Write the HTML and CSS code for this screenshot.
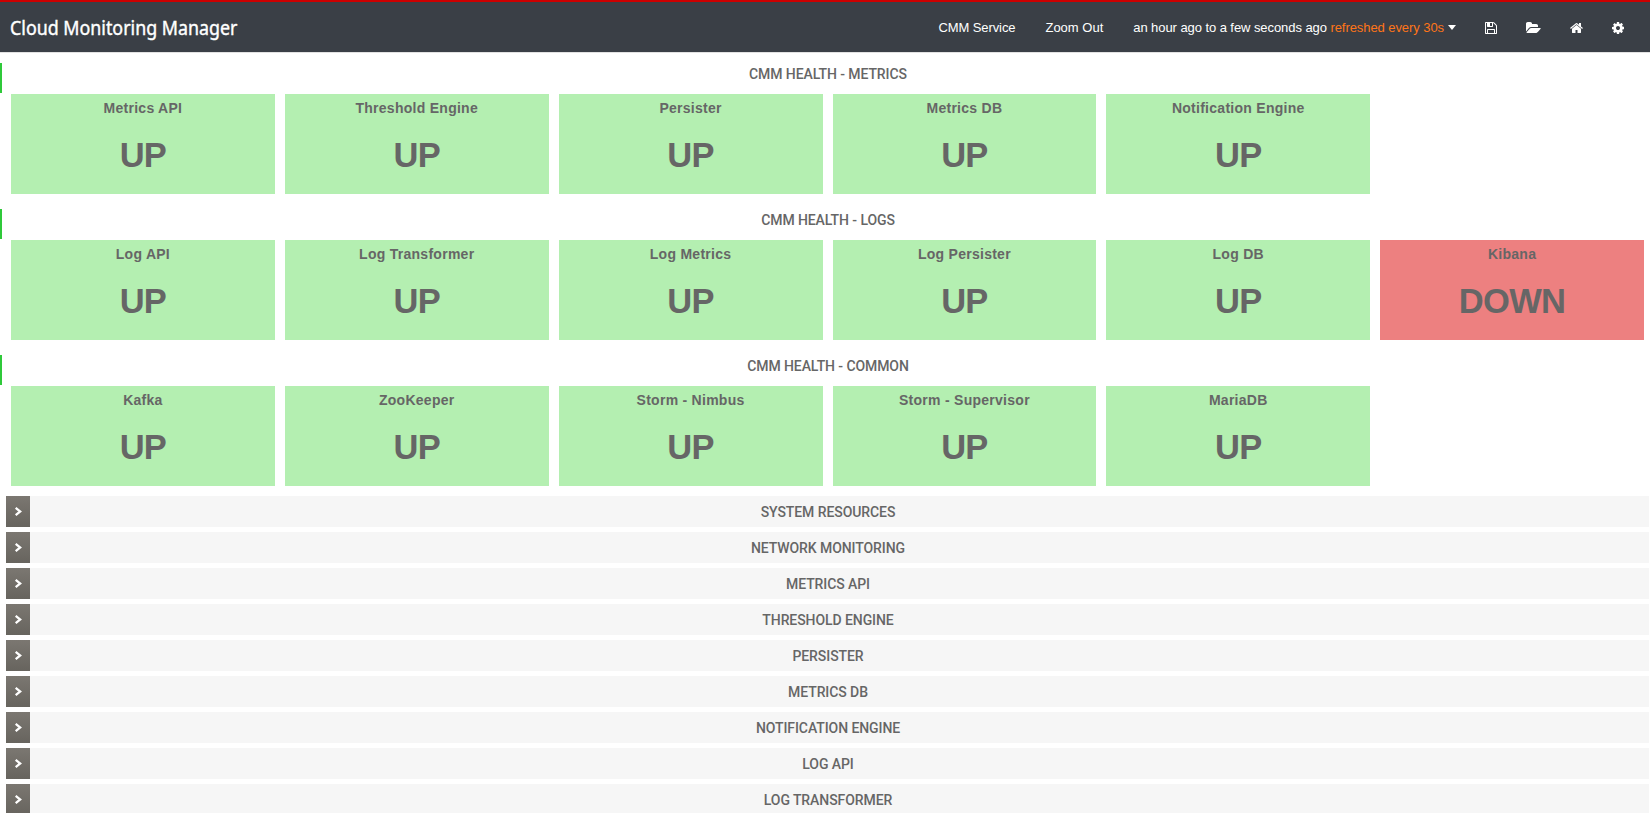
FILE: index.html
```html
<!DOCTYPE html>
<html lang="en">
<head>
<meta charset="utf-8">
<title>Cloud Monitoring Manager</title>
<link rel="stylesheet" href="styles.css">
</head>
<body>
<header class="topbar">
  <h1 class="brand">Cloud Monitoring Manager</h1>
  <nav class="nav">
    <a class="nav-service">CMM Service</a>
    <a class="nav-zoom">Zoom Out</a>
    <a class="nav-time">an hour ago to a few seconds ago <span class="refresh">refreshed every 30s</span><i class="caret"></i></a>
    <svg class="icon icon-save" viewBox="0 0 1536 1792"><path d="M384 1536h768v-384H384v384zm896 0h128V640q0-14-10-38.500T1378 567l-281-281q-10-10-34-20t-39-10v416q0 40-28 68t-68 28H352q-40 0-68-28t-28-68V256H128v1280h128v-416q0-40 28-68t68-28h832q40 0 68 28t28 68v416zM896 608V288q0-13-9.500-22.500T864 256H672q-13 0-22.500 9.500T640 288v320q0 13 9.500 22.500T672 640h192q13 0 22.500-9.500T896 608zm640 32v928q0 40-28 68t-68 28H96q-40 0-68-28t-28-68V224q0-40 28-68t68-28h928q40 0 88 20t76 48l280 280q28 28 48 76t20 88z"/></svg>
    <svg class="icon icon-folder" viewBox="0 0 1920 1792"><path d="M1879 952q0 31-31 66l-336 396q-43 51-120.500 86.500T1248 1536H160q-34 0-60.500-13T73 1480q0-31 31-66l336-396q43-51 120.500-86.500T704 896h1088q34 0 60.500 13t26.500 43zm-343-344v160H704q-94 0-197 47.500T343 935L6 1331l-5 6q0-4-.5-12.500T0 1312V352q0-92 66-158t158-66h320q92 0 158 66t66 158v32h544q92 0 158 66t66 158z"/></svg>
    <svg class="icon icon-home" viewBox="0 0 1664 1792"><path d="M1408 992v480q0 26-19 45t-45 19H960v-384H704v384H320q-26 0-45-19t-19-45V992q0-1 .5-3t.5-3l575-474 575 474q1 2 1 6zm223-69l-62 74q-8 9-21 11h-3q-13 0-21-7L832 424l-692 577q-12 8-24 7-13-2-21-11l-62-74q-8-10-7-23.500T37 878l719-599q32-26 76-26t76 26l244 204V288q0-14 9-23t23-9h192q14 0 23 9t9 23v408l219 182q10 8 11 21.500t-8 23.500z"/></svg>
    <svg class="icon icon-cog" viewBox="0 0 1536 1792"><path d="M1024 896q0-106-75-181t-181-75-181 75-75 181 75 181 181 75 181-75 75-181zm512-109v222q0 12-8 23t-20 13l-185 28q-19 54-39 91 35 50 107 138 10 12 10 25t-9 23q-27 37-99 108t-94 71q-12 0-26-9l-138-108q-44 23-91 38-16 136-29 186-7 28-36 28H657q-14 0-24.500-8.500T621 1640l-28-184q-49-16-90-37l-141 107q-10 9-25 9-14 0-25-11-126-114-165-168-7-10-7-23 0-12 8-23 15-21 51-66.500t54-70.500q-27-50-41-99L29 1046q-13-2-21-12.500T0 1010V788q0-12 8-23t19-13l186-28q14-46 39-92-40-57-107-138-10-12-10-24 0-10 9-23 26-36 98.500-107.500T337 268q13 0 26 10l138 107q44-23 91-38 16-136 29-186 7-28 36-28h222q14 0 24.500 8.500T915 152l28 184q49 16 90 37l142-107q9-9 24-9 13 0 25 10 129 119 165 170 7 8 7 22 0 12-8 23-15 21-51 66.500t-54 70.500q26 50 41 98l183 28q13 2 21 12.500t8 23.500z"/></svg>
  </nav>
</header>
<main class="dashboard">
  <section class="health">
    <h2 class="row-title health-title">CMM HEALTH - METRICS</h2>
    <div class="cards">
      <article class="card"><h3>Metrics API</h3><strong>UP</strong></article>
      <article class="card"><h3>Threshold Engine</h3><strong>UP</strong></article>
      <article class="card"><h3>Persister</h3><strong>UP</strong></article>
      <article class="card"><h3>Metrics DB</h3><strong>UP</strong></article>
      <article class="card"><h3>Notification Engine</h3><strong>UP</strong></article>
    </div>
  </section>
  <section class="health">
    <h2 class="row-title health-title">CMM HEALTH - LOGS</h2>
    <div class="cards">
      <article class="card"><h3>Log API</h3><strong>UP</strong></article>
      <article class="card"><h3>Log Transformer</h3><strong>UP</strong></article>
      <article class="card"><h3>Log Metrics</h3><strong>UP</strong></article>
      <article class="card"><h3>Log Persister</h3><strong>UP</strong></article>
      <article class="card"><h3>Log DB</h3><strong>UP</strong></article>
      <article class="card card-down"><h3>Kibana</h3><strong>DOWN</strong></article>
    </div>
  </section>
  <section class="health">
    <h2 class="row-title health-title">CMM HEALTH - COMMON</h2>
    <div class="cards">
      <article class="card"><h3>Kafka</h3><strong>UP</strong></article>
      <article class="card"><h3>ZooKeeper</h3><strong>UP</strong></article>
      <article class="card"><h3>Storm - Nimbus</h3><strong>UP</strong></article>
      <article class="card"><h3>Storm - Supervisor</h3><strong>UP</strong></article>
      <article class="card"><h3>MariaDB</h3><strong>UP</strong></article>
    </div>
  </section>
  <div class="rows">
    <div class="row"><span class="toggle"><svg viewBox="0 0 8 8"><path d="M1.500 .8 5.500 4 1.500 7.200"/></svg></span><h2 class="row-title">SYSTEM RESOURCES</h2></div>
    <div class="row"><span class="toggle"><svg viewBox="0 0 8 8"><path d="M1.500 .8 5.500 4 1.500 7.200"/></svg></span><h2 class="row-title">NETWORK MONITORING</h2></div>
    <div class="row"><span class="toggle"><svg viewBox="0 0 8 8"><path d="M1.500 .8 5.500 4 1.500 7.200"/></svg></span><h2 class="row-title">METRICS API</h2></div>
    <div class="row"><span class="toggle"><svg viewBox="0 0 8 8"><path d="M1.500 .8 5.500 4 1.500 7.200"/></svg></span><h2 class="row-title">THRESHOLD ENGINE</h2></div>
    <div class="row"><span class="toggle"><svg viewBox="0 0 8 8"><path d="M1.500 .8 5.500 4 1.500 7.200"/></svg></span><h2 class="row-title">PERSISTER</h2></div>
    <div class="row"><span class="toggle"><svg viewBox="0 0 8 8"><path d="M1.500 .8 5.500 4 1.500 7.200"/></svg></span><h2 class="row-title">METRICS DB</h2></div>
    <div class="row"><span class="toggle"><svg viewBox="0 0 8 8"><path d="M1.500 .8 5.500 4 1.500 7.200"/></svg></span><h2 class="row-title">NOTIFICATION ENGINE</h2></div>
    <div class="row"><span class="toggle"><svg viewBox="0 0 8 8"><path d="M1.500 .8 5.500 4 1.500 7.200"/></svg></span><h2 class="row-title">LOG API</h2></div>
    <div class="row"><span class="toggle"><svg viewBox="0 0 8 8"><path d="M1.500 .8 5.500 4 1.500 7.200"/></svg></span><h2 class="row-title">LOG TRANSFORMER</h2></div>
  </div>
</main>
</body>
</html>
```

FILE: styles.css
```css
* { box-sizing: border-box; margin: 0; padding: 0; }

body {
  height: 813px;
  overflow: hidden;
  background: #fff;
  color: #666;
  font-family: "Liberation Sans", Arial, sans-serif;
  font-size: 13px;
}

.topbar {
  display: flex;
  align-items: center;
  justify-content: space-between;
  height: 53px;
  padding: 1px 26px 0 10px;
  background: #3a3f46;
  border-top: 2px solid #c00;
  border-bottom: 1px solid #e2e2e2;
}

.brand {
  color: #fff;
  font-family: "Noto Sans", sans-serif;
  font-size: 19.500px;
  font-weight: 400;
  line-height: 26px;
  white-space: nowrap;
  transform: scaleX(.915);
  transform-origin: left center;
  -webkit-text-stroke: .4px #fff;
}

.nav {
  display: flex;
  align-items: center;
  color: #fff;
  line-height: 16px;
  white-space: nowrap;
}

.nav-service, .nav-zoom { margin-right: 30px; }
.nav-service { letter-spacing: -.1px; }
.nav-time { letter-spacing: -.07px; }
.refresh { color: #ff7518; }

.caret {
  display: inline-block;
  margin-left: 4px;
  vertical-align: 2px;
  border: 4px solid transparent;
  border-top: 5px solid #fff;
  border-bottom: 0;
}

.icon { height: 14px; fill: #fff; }
.icon-save { width: 12px; margin-left: 29px; }
.icon-folder { width: 15px; margin-left: 29px; }
.icon-home { width: 13px; margin-left: 29px; }
.icon-cog { width: 12px; margin-left: 29px; }

.dashboard { padding-top: 10px; }

.health {
  height: 146px;
}

.row-title {
  flex: 1;
  font-family: Roboto, "Liberation Sans", sans-serif;
  font-size: 14px;
  font-weight: 500;
  letter-spacing: -.08px;
  line-height: 32px;
  text-align: center;
}

.health-title {
  height: 30px;
  padding-left: 4px;
  line-height: 22px;
  border-left: 2px solid #2fc93a;
}

.cards {
  display: grid;
  grid-template-columns: repeat(6, 1fr);
  gap: 10px;
  padding: 1px 6px 0 11px;
}

.card {
  height: 100px;
  background: #b4efb1;
  text-align: center;
}

.card-down { background: #ed8080; }

.card h3 {
  padding-top: 6px;
  font-size: 14px;
  line-height: 16px;
  letter-spacing: .27px;
}

.card strong {
  display: block;
  margin-top: 19px;
  font-size: 34.500px;
  line-height: 40px;
  letter-spacing: -.7px;
}

.rows {
  display: flex;
  flex-direction: column;
  gap: 5px;
  margin: -5px 1px 0 6px;
}

.row {
  display: flex;
  height: 31px;
  background: #f6f6f6;
}

.toggle {
  display: flex;
  align-items: center;
  justify-content: center;
  width: 24px;
  background: linear-gradient(#7b7771, #67645e);
}

.toggle svg {
  width: 9px;
  height: 9px;
  fill: none;
  stroke: #fff;
  stroke-width: 2;
}
.rows .row-title { padding-right: 23px; }
```
